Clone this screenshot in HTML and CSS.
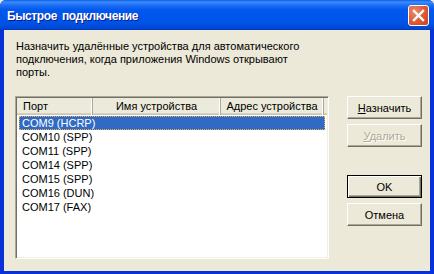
FILE: index.html
```html
<!DOCTYPE html>
<html lang="ru">
<head>
<meta charset="utf-8">
<link rel="stylesheet" href="styles.css">
</head>
<body>
<div class="window">
  <div class="titlebar">
    <span class="title">Быстрое подключение</span>
    <div class="close">
      <svg width="13" height="13" viewBox="0 0 13 13"><path d="M2 2 L11 11 M11 2 L2 11" stroke="#fff" stroke-width="2.4" stroke-linecap="square"/></svg>
    </div>
  </div>
  <div class="client">
    <p class="desc">Назначить удалённые устройства для автоматического<br>подключения, когда приложения Windows открывают<br>порты.</p>
    <div class="main">
      <div class="listview">
        <div class="header">
          <div class="col c1">Порт</div>
          <div class="col c2">Имя устройства</div>
          <div class="col c3">Адрес устройства</div>
          <div class="col rest"></div>
        </div>
        <div class="rows">
          <div class="row sel">COM9 (HCRP)</div>
          <div class="row">COM10 (SPP)</div>
          <div class="row">COM11 (SPP)</div>
          <div class="row">COM14 (SPP)</div>
          <div class="row">COM15 (SPP)</div>
          <div class="row">COM16 (DUN)</div>
          <div class="row">COM17 (FAX)</div>
        </div>
      </div>
      <div class="buttons">
        <div class="btn"><span><u>Н</u>азначить</span></div>
        <div class="btn disabled"><span><u>У</u>далить</span></div>
        <div class="btn default ok">OK</div>
        <div class="btn">Отмена</div>
      </div>
    </div>
  </div>
</div>
</body>
</html>
```
FILE: styles.css
```css
html, body {
  margin: 0;
  padding: 0;
  background: #ece9d8;
}
.window {
  width: 434px;
  height: 274px;
  box-sizing: border-box;
  display: flex;
  flex-direction: column;
  background: #0831d9;
  border-radius: 6px 6px 0 0;
  overflow: hidden;
}
.titlebar {
  height: 30px;
  flex: none;
  display: flex;
  align-items: center;
  justify-content: space-between;
  padding: 0 5px 0 7px;
  background: linear-gradient(to bottom, #0a5ee8 0px, #3c8cfc 2px, #1f6ff5 5px, #0058ee 10px, #0055ea 18px, #0052e4 24px, #0047d4 28px, #003bbf 30px);
}
.title {
  font: bold 12px "Liberation Sans", sans-serif;
  letter-spacing: -0.4px;
  word-spacing: 2px;
  color: #fff;
  text-shadow: 1px 1px 0 #0a1a8a;
  padding-top: 1px;
}
.close {
  width: 21px;
  height: 21px;
  box-sizing: border-box;
  border: 1px solid #fff;
  border-radius: 3px;
  background: radial-gradient(circle at 30% 30%, #ec8a6c 0%, #e0603c 45%, #c9401c 100%);
  display: flex;
  align-items: center;
  justify-content: center;
  margin-top: 1px;
}
.client {
  flex: 1;
  margin: 0 4px 3px 4px;
  background: #ece9d8;
  padding: 10px 0 0 11px;
  font: 11px "Liberation Sans", sans-serif;
  color: #000;
}
.desc {
  margin: 0 0 0 1px;
  line-height: 13px;
}
.main {
  display: flex;
  margin-top: 17px;
}
.listview {
  width: 314px;
  height: 163px;
  box-sizing: border-box;
  border: 1px solid;
  border-color: #aca899 #fff #fff #aca899;
  box-shadow: inset 1px 1px 0 #716f64, inset -1px -1px 0 #f1efe2;
  background: #fff;
  padding: 1px;
}
.header {
  display: flex;
  height: 17px;
  background: #ebeadb;
  box-shadow: inset 0 -1px 0 #cbc7b8, inset 0 -2px 0 #d6d2c2;
}
.col {
  box-sizing: border-box;
  height: 17px;
  line-height: 17px;
  border-right: 1px solid #aca899;
  box-shadow: inset -1px 0 0 #fff;
  white-space: nowrap;
  overflow: hidden;
}
.c1 { width: 76px; padding-left: 6px; }
.c2 { width: 128px; text-align: center; }
.c3 { width: 103px; text-align: center; }
.rest { flex: 1; border-right: none; box-shadow: none; }
.rows {
  padding: 1px 0 0 2px;
}
.row {
  width: 306px;
  height: 14px;
  line-height: 14px;
  box-sizing: border-box;
  padding-left: 3px;
  white-space: nowrap;
}
.row.sel {
  background: #316ac5;
  color: #fff;
  outline: 1px dotted #e8b24a;
  outline-offset: -1px;
}
.buttons {
  display: flex;
  flex-direction: column;
  margin-left: 18px;
  gap: 5px;
}
.btn {
  width: 75px;
  height: 23px;
  box-sizing: border-box;
  background: #ece9d8;
  border: 1px solid;
  border-color: #fff #716f64 #716f64 #fff;
  box-shadow: inset -1px -1px 0 #aca899;
  display: flex;
  align-items: center;
  justify-content: center;
}
.btn.disabled {
  color: #aca899;
  text-shadow: 1px 1px 0 #fff;
}
.btn.default {
  border: 1px solid #000;
  box-shadow: inset 1px 1px 0 #fff, inset -1px -1px 0 #716f64, inset -2px -2px 0 #aca899;
}
.btn.ok {
  margin-top: 23px;
}
```
